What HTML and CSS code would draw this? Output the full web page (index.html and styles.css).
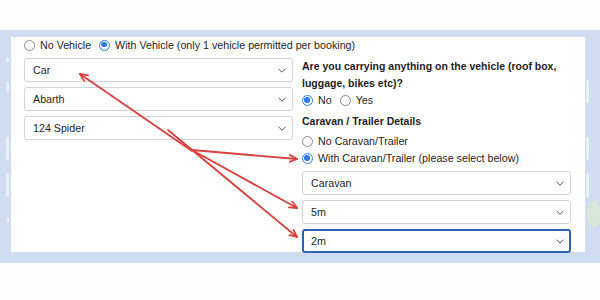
FILE: index.html
```html
<!DOCTYPE html>
<html>
<head>
<meta charset="utf-8">
<link rel="stylesheet" href="styles.css">
</head>
<body>
<div class="band">
  <div class="gutter gutter-left">
    <span class="ghost g1"></span>
    <span class="ghost g2"></span>
    <span class="ghost g3"></span>
    <span class="ghost g4"></span>
    <span class="ghost g5"></span>
  </div>
  <div class="panel">
    <div class="radio-row top-row">
      <span class="radio"></span><span class="label">No Vehicle</span>
      <span class="radio checked"></span><span class="label">With Vehicle (only 1 vehicle permitted per booking)</span>
    </div>
    <div class="cols">
      <div class="col">
        <div class="select"><span>Car</span><svg class="chev" width="8" height="5" viewBox="0 0 8 5"><path d="M0.5 0.8 L4 4.2 L7.5 0.8" fill="none" stroke="#555" stroke-width="1"/></svg></div>
        <div class="select"><span>Abarth</span><svg class="chev" width="8" height="5" viewBox="0 0 8 5"><path d="M0.5 0.8 L4 4.2 L7.5 0.8" fill="none" stroke="#555" stroke-width="1"/></svg></div>
        <div class="select"><span>124 Spider</span><svg class="chev" width="8" height="5" viewBox="0 0 8 5"><path d="M0.5 0.8 L4 4.2 L7.5 0.8" fill="none" stroke="#555" stroke-width="1"/></svg></div>
      </div>
      <div class="col">
        <p class="q">Are you carrying anything on the vehicle (roof box, luggage, bikes etc)?</p>
        <div class="radio-row">
          <span class="radio checked"></span><span class="label">No</span>
          <span class="radio"></span><span class="label">Yes</span>
        </div>
        <p class="h">Caravan / Trailer Details</p>
        <div class="radio-row r-no"><span class="radio"></span><span class="label">No Caravan/Trailer</span></div>
        <div class="radio-row"><span class="radio checked"></span><span class="label">With Caravan/Trailer (please select below)</span></div>
        <div class="select first"><span>Caravan</span><svg class="chev" width="8" height="5" viewBox="0 0 8 5"><path d="M0.5 0.8 L4 4.2 L7.5 0.8" fill="none" stroke="#555" stroke-width="1"/></svg></div>
        <div class="select"><span>5m</span><svg class="chev" width="8" height="5" viewBox="0 0 8 5"><path d="M0.5 0.8 L4 4.2 L7.5 0.8" fill="none" stroke="#555" stroke-width="1"/></svg></div>
        <div class="select focus"><span>2m</span><svg class="chev" width="8" height="5" viewBox="0 0 8 5"><path d="M0.5 0.8 L4 4.2 L7.5 0.8" fill="none" stroke="#555" stroke-width="1"/></svg></div>
      </div>
    </div>
  </div>
  <div class="gutter gutter-right">
    <span class="ghost r1"></span>
    <span class="ghost r2"></span>
    <span class="ghost r3"></span>
    <span class="dot"></span>
  </div>
</div>
<svg class="arrows" width="600" height="300" viewBox="0 0 600 300">
  <defs>
    <marker id="ah" markerWidth="10" markerHeight="10" refX="8" refY="4" orient="auto" markerUnits="userSpaceOnUse">
      <path d="M0.5 0.5 L8 4 L0.5 7.5" fill="none" stroke="#d9403d" stroke-width="1.8" stroke-linecap="round" stroke-linejoin="round"/>
    </marker>
  </defs>
  <g stroke="#d9403d" stroke-width="1.8" fill="none" stroke-linecap="round">
    <line x1="192" y1="151" x2="80" y2="74" marker-end="url(#ah)"/>
    <line x1="192" y1="150" x2="297" y2="159" marker-end="url(#ah)"/>
    <line x1="192" y1="150" x2="297" y2="208" marker-end="url(#ah)"/>
    <line x1="168" y1="130" x2="297" y2="237" marker-end="url(#ah)"/>
  </g>
</svg>
</body>
</html>
```

FILE: styles.css
```css
html, body {
  margin: 0;
  padding: 0;
  background: #fefefe;
  width: 600px;
  height: 300px;
  overflow: hidden;
  font-family: "Liberation Sans", Arial, sans-serif;
  font-size: 10.7px;
  color: #1d1d1d;
}

.band {
  margin-top: 30px;
  height: 233px;
  background: #cfdcf1;
  display: flex;
  align-items: flex-start;
}

.gutter {
  display: flex;
  flex-direction: column;
  align-items: center;
}

.gutter-left {
  width: 11px;
  padding-top: 27px;
}

.gutter-right {
  width: 15px;
  padding-top: 50px;
  align-items: flex-start;
}

.ghost {
  display: block;
  width: 3px;
  background: rgba(255, 255, 255, 0.5);
  border-radius: 1px;
}

.g1 { height: 5px; margin-left: 4px; }
.g2 { height: 10px; margin-top: 20px; margin-left: 4px; }
.g3 { height: 23px; margin-top: 45px; margin-left: 4px; }
.g4 { height: 24px; margin-top: 13px; margin-left: 4px; }
.g5 { height: 6px; margin-top: 20px; margin-left: 4px; width: 2px; }

.r1 { height: 23px; margin-left: 1px; }
.r2 { height: 23px; margin-top: 34px; margin-left: 1px; }
.r3 { height: 25px; margin-top: 13px; margin-left: 1px; }
.dot {
  width: 14px;
  height: 28px;
  margin-top: 2px;
  margin-left: 2px;
  border-radius: 50%;
  background: rgba(226, 240, 200, 0.5);
}

.panel {
  margin-top: 7px;
  width: 574px;
  height: 216px;
  background: #fff;
  border-bottom: 1px solid #d5dbe4;
  box-sizing: border-box;
  padding: 0 14px 0 13px;
}

.radio-row {
  display: flex;
  align-items: center;
  height: 17px;
  line-height: 17px;
  white-space: nowrap;
}

.top-row {
  height: 16px;
  line-height: 16px;
}

.radio {
  width: 11px;
  height: 11px;
  box-sizing: border-box;
  border: 1px solid #8c8c8c;
  border-radius: 50%;
  background: #fff;
  flex: none;
  margin-right: 5px;
  position: relative;
}

.radio.checked {
  border: 1.5px solid #2f7ce6;
  background: #fff;
}

.radio.checked::after {
  content: "";
  position: absolute;
  left: 1.25px;
  top: 1.25px;
  width: 5.5px;
  height: 5.5px;
  border-radius: 50%;
  background: #2f7ce6;
}

.label {
  margin-right: 8px;
}

.cols {
  display: grid;
  grid-template-columns: 269px 269px;
  column-gap: 9px;
  margin-top: 5px;
}

.col {
  display: flex;
  flex-direction: column;
}

.select {
  height: 24px;
  box-sizing: border-box;
  border: 1px solid #d3d3d3;
  border-radius: 3px;
  background: #fff;
  display: flex;
  align-items: center;
  justify-content: space-between;
  padding: 0 6px 0 8px;
  margin-bottom: 5px;
}

.select.first {
  margin-top: 4px;
}

.select.focus {
  border: 2px solid #2c64b0;
  padding: 0 5px 0 7px;
}

.chev {
  display: block;
}

.q {
  margin: 0;
  font-weight: bold;
  line-height: 17px;
  font-size: 10.5px;
}

.h {
  margin: 4px 0 0 0;
  font-weight: bold;
  line-height: 17px;
  font-size: 10.5px;
}

.r-no {
  margin-top: 3px;
}

.arrows {
  position: absolute;
  left: 0;
  top: 0;
  pointer-events: none;
}
```
